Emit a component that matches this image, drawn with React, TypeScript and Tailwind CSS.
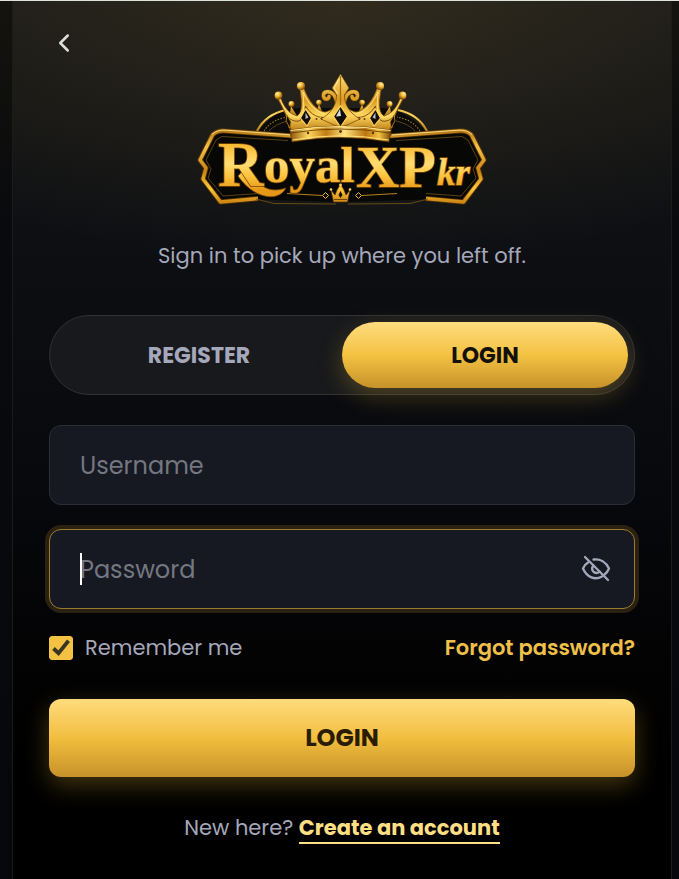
import { useState } from 'react';
import type { FormEvent } from 'react';
import { ChevronLeft, Eye } from 'lucide-react';

function CrownHalf() {
  return (
    <g>
      {/* small back spikes */}
      <path d="M288 128 L291 106 L302 124 Z" fill="url(#goldDeep)" />
      <path d="M314 119 L319 104 L326 121 Z" fill="url(#goldDeep)" />
      <circle cx="291.500" cy="104" r="3" fill="url(#ball)" />
      <circle cx="319" cy="102.500" r="2.800" fill="url(#ball)" />
      {/* outer and inner points */}
      <path
        d="M276.500 97 L280.500 97 C284 108 290 114 297 116 C303 112 302 102 299.500 87 L303.500 87 C308 100 316 111 325 112 C333 110 336 106 337 100 L340.500 100 L340.500 129 C323 128.500 307 131 291 136 C289 121 284 109 276.500 97 Z"
        fill="url(#gold)"
        stroke="#6b3f06"
        strokeWidth="0.700"
      />
      <path d="M280 99 C284 110 290 116 298 118 C305 115 304 105 303 92 C308 103 316 113 326 114" fill="none" stroke="#ffe48a" strokeWidth="0.900" />
      <path d="M284 111 C288 119 293 122 299 121 C305 118 305 111 305.500 106 C311 115 319 119 328 117" fill="none" stroke="#6d4107" strokeWidth="0.900" />
      <path d="M289 122 C290 127 291 131 292 134" fill="none" stroke="#7b4806" strokeWidth="1.600" />
      <circle cx="278.500" cy="95.500" r="3.900" fill="url(#ball)" />
      <circle cx="301" cy="86" r="4.100" fill="url(#ball)" />
      {/* scroll beside the centre spire */}
      <path
        d="M337 111 C338 103 336 98 334 95 C330 90 323 91 323.500 96 C324 100 329 100 329 96.500"
        fill="none"
        stroke="#5b3504"
        strokeWidth="4.600"
        strokeLinecap="round"
      />
      <path
        d="M337 111 C338 103 336 98 334 95 C330 90 323 91 323.500 96 C324 100 329 100 329 96.500"
        fill="none"
        stroke="url(#gold)"
        strokeWidth="3.400"
        strokeLinecap="round"
      />
      {/* side gems */}
      <path d="M305.500 109 L311.500 118 L307 126 L300.500 118 Z" fill="#120d08" stroke="#ffd45a" strokeWidth="1.100" />
      <path d="M305.500 112.500 L308.500 117.500 L305.500 119 Z" fill="#b9bcc2" />
      <path d="M287 115 L291 122 L290 128 L286 121 Z" fill="#120d08" stroke="#c98a18" strokeWidth="0.800" />
      <circle cx="322" cy="118.500" r="2" fill="#6b3c05" stroke="#ffd45a" strokeWidth="0.700" />
      <circle cx="316.500" cy="119" r="1" fill="#6b3c05" />
      <circle cx="327.500" cy="118" r="1" fill="#6b3c05" />
    </g>
  );
}

function PlateHalf() {
  return (
    <g>
      <path d="M343 138 L300 136 L224 130.500 Q219 130 215 134 L200.500 160 L204.500 169 L200.500 176 L220.500 203 L260 199.500 L343 202 Z" fill="#070706" />
      <path
        d="M294 136 L226 131 Q217 130 212.500 135 L200 160 L206 168 L203 179 L220.500 202 L258 198.500"
        fill="none"
        stroke="#593404"
        strokeWidth="5.200"
        strokeLinejoin="round"
      />
      <path
        d="M294 136 L226 131 Q217 130 212.500 135 L200 160 L206 168 L203 179 L220.500 202 L258 198.500"
        fill="none"
        stroke="url(#gold)"
        strokeWidth="3.400"
        strokeLinejoin="round"
      />
      <path d="M292 135 L226 130.200 Q217 129.500 212 134.500" fill="none" stroke="#fff0a6" strokeWidth="0.800" />
      <path d="M288 140.500 L222 136.500 L216 140 L206 160 L211 169 L208 178 L223 196 L258 193.500" fill="none" stroke="#6f5118" strokeWidth="0.800" />
      <path d="M256 199 L274 203.500 L336 204" fill="none" stroke="#6f5118" strokeWidth="0.900" />
      <path d="M287 193.500 L322 195.500" stroke="#b8811c" strokeWidth="1.100" />
      <path d="M325.500 192.500 L328.500 195.500 L325.500 198.500 L322.500 195.500 Z" fill="#0a0805" stroke="#f2b932" strokeWidth="1" />
      <path d="M257 131 Q266 114 286 110" fill="none" stroke="url(#gold)" strokeWidth="2.200" />
      <path d="M264 131 Q271 120 287 117" fill="none" stroke="#a37a24" strokeWidth="1.100" strokeDasharray="1.500 1.500" />
      <path d="M269 131 Q275 124 288 121" fill="none" stroke="#6f5118" strokeWidth="0.800" />
    </g>
  );
}

function Logo() {
  return (
    <svg viewBox="192 65 300 145" className="h-[145px] w-[300px]" role="img" aria-label="RoyalXPkr">
      <defs>
        <linearGradient id="gold" gradientUnits="userSpaceOnUse" x1="0" y1="74" x2="0" y2="204">
          <stop offset="0" stopColor="#ffe07a" />
          <stop offset="0.200" stopColor="#d99a20" />
          <stop offset="0.320" stopColor="#ffd65c" />
          <stop offset="0.440" stopColor="#b97a14" />
          <stop offset="0.560" stopColor="#f3c24a" />
          <stop offset="0.750" stopColor="#c98413" />
          <stop offset="0.880" stopColor="#ffc83c" />
          <stop offset="1" stopColor="#c67f10" />
        </linearGradient>
        <linearGradient id="goldText" gradientUnits="userSpaceOnUse" x1="0" y1="142" x2="0" y2="190">
          <stop offset="0" stopColor="#f6b52b" />
          <stop offset="0.450" stopColor="#ffdc72" />
          <stop offset="0.700" stopColor="#fdc540" />
          <stop offset="1" stopColor="#e59817" />
        </linearGradient>
        <linearGradient id="goldDeep" x1="0" y1="0" x2="0" y2="1">
          <stop offset="0" stopColor="#f0b02b" />
          <stop offset="1" stopColor="#6d4107" />
        </linearGradient>
        <linearGradient id="band" x1="0" y1="0" x2="1" y2="0">
          <stop offset="0" stopColor="#8a540a" />
          <stop offset="0.180" stopColor="#ffd75e" />
          <stop offset="0.360" stopColor="#c07c12" />
          <stop offset="0.540" stopColor="#ffe27c" />
          <stop offset="0.750" stopColor="#b9740f" />
          <stop offset="0.880" stopColor="#f7c23f" />
          <stop offset="1" stopColor="#7c4a08" />
        </linearGradient>
        <radialGradient id="ball" cx="0.350" cy="0.300" r="0.750">
          <stop offset="0" stopColor="#fff3b8" />
          <stop offset="0.450" stopColor="#f3b32d" />
          <stop offset="1" stopColor="#6b3f06" />
        </radialGradient>
      </defs>

      <path d="M257 133 Q275 108 300 108 L382 108 Q408 110 427 133 Z" fill="#0a0a08" />
      <PlateHalf />
      <g transform="matrix(-1 0 0 1 684 0)">
        <PlateHalf />
      </g>

      <CrownHalf />
      <g transform="matrix(-1 0 0 1 681 0)">
        <CrownHalf />
      </g>

      {/* centre spire and gem */}
      <path
        d="M340.500 74 L349 88 L344.500 95 C344.500 104 349 113 360 119 L340.500 128 L321 119 C332 113 336.500 104 336.500 95 L332 88 Z"
        fill="url(#gold)"
        stroke="#6b3f06"
        strokeWidth="0.700"
      />
      <path d="M340.500 76 L340.500 106" stroke="#a56a0c" strokeWidth="1.200" />
      <path d="M339 79 L334 88 L338 94" fill="none" stroke="#fff0a6" strokeWidth="0.900" />
      <path d="M340.500 106 L347.500 116.500 L340.500 127 L333.500 116.500 Z" fill="#100c08" stroke="#ffd45a" strokeWidth="1.300" />
      <path d="M340 109 L341 116 L336 116.500 Z" fill="#d5d8dc" />

      {/* base band */}
      <path d="M290 130 Q340 122 391 130 L389 142 Q340 133 292 142 Z" fill="url(#band)" stroke="#5b3504" strokeWidth="0.700" />
      <path d="M290.500 130.500 Q340 122.500 390.500 130.500" fill="none" stroke="#ffe690" strokeWidth="1" />
      <path d="M291 133 Q340 125 390 133" fill="none" stroke="#6b3f06" strokeWidth="0.900" />
      <path d="M292.500 140 Q340 131.500 388.500 140" fill="none" stroke="#ffe07a" strokeWidth="1" />
      <circle cx="308" cy="133" r="1.200" fill="#5b3504" />
      <circle cx="340.500" cy="131.500" r="1.400" fill="#5b3504" />
      <circle cx="373" cy="133" r="1.200" fill="#5b3504" />

      {/* flourish under the first letter */}
      <path d="M247 166 C255 182 266 195 286 188 C277 204 252 197 238 176 Z" fill="url(#goldText)" stroke="#7b4806" strokeWidth="0.800" />

      <g
        fill="url(#goldText)"
        stroke="#7b4806"
        strokeWidth="1.600"
        paintOrder="stroke"
        fontFamily="'Liberation Serif', serif"
        fontWeight="700"
      >
        <text x="218" y="186" fontSize="63">R</text>
        <text x="264" y="182" fontSize="51">oyal</text>
        <text x="356" y="187" fontSize="60">XP</text>
        <text x="437" y="185" fontSize="37" fontStyle="italic">kr</text>
      </g>

      {/* small crown below the wordmark */}
      <path d="M331 190 L335 195 L337 190 L340.500 184 L344 190 L346 195 L350 190 L347.500 202 L333.500 202 Z" fill="url(#gold)" stroke="#5b3504" strokeWidth="0.700" />
      <path d="M340.500 191 L342.500 195 L340.500 198 L338.500 195 Z" fill="#1a1208" />
      <path d="M334 199.500 L347 199.500" stroke="#5b3504" strokeWidth="0.800" />
      <circle cx="340.500" cy="185" r="1.400" fill="#ffd45a" />
      <circle cx="331" cy="189.500" r="1.300" fill="#ffd45a" />
      <circle cx="350" cy="189.500" r="1.300" fill="#ffd45a" />
    </svg>
  );
}

export default function App() {
  const [username, setUsername] = useState('');
  const [password, setPassword] = useState('');
  const [showPassword, setShowPassword] = useState(false);
  const [remember, setRemember] = useState(true);

  const handleSubmit = (e: FormEvent) => {
    e.preventDefault();
  };

  return (
    <div className="min-h-screen border-t border-[#dfe2da] bg-[#07080d] bg-[linear-gradient(to_bottom,#14130f,#090a0d_220px,#07080d)] pr-[7px] pl-3 font-[Poppins,Inter,sans-serif]">
      <main className="flex min-h-[calc(100vh-1px)] flex-col border-x border-[#1b1b17] bg-[radial-gradient(ellipse_85%_270px_at_50%_0,rgba(235,190,80,0.11),transparent),linear-gradient(to_bottom,#191917_0,#0d0f13_240px,#08090d_480px,#030304_650px,#000_780px)] px-9 pt-5 pb-8">
        <button type="button" aria-label="Back" className="flex h-11 w-[30px] items-center justify-center text-[#dcdcda]">
          <ChevronLeft size={32} strokeWidth={2} />
        </button>

        <div className="flex justify-center">
          <Logo />
        </div>

        <p className="mt-7 text-center text-[21px] leading-9 text-[#a5a8ba]">Sign in to pick up where you left off.</p>

        <div className="mt-[41px] flex rounded-full border border-[#303134] bg-[#18191c] p-1.5">
          <button type="button" className="h-[66px] flex-1 rounded-full text-[22px] font-bold text-[#a5a8ba]">
            REGISTER
          </button>
          <button
            type="button"
            className="h-[66px] flex-1 rounded-full bg-linear-to-b from-[#ffdc7c] via-[#f4c242] to-[#c7922a] text-[22px] font-bold text-[#14110a] shadow-[0_8px_24px_rgba(245,190,50,0.25)]"
          >
            LOGIN
          </button>
        </div>

        <form onSubmit={handleSubmit} className="mt-[30px] flex flex-col">
          <input
            type="text"
            aria-label="Username"
            placeholder="Username"
            value={username}
            onChange={(e) => setUsername(e.target.value)}
            className="h-20 w-full rounded-xl border border-[#2b2e36] bg-[#161922] px-[30px] text-2xl text-white outline-none placeholder:text-[#747780]"
          />

          <div className="relative mt-6">
            <input
              type={showPassword ? 'text' : 'password'}
              aria-label="Password"
              placeholder="Password"
              value={password}
              onChange={(e) => setPassword(e.target.value)}
              className="peer h-20 w-full rounded-xl border border-[#9a7c30] bg-[#161922] pr-16 pl-[30px] text-2xl text-white outline-none ring-4 ring-[#2a2110] placeholder:text-[#747780]"
            />
            {password === '' && <span className="absolute top-6 left-[31px] h-8 w-0.5 bg-white peer-focus:hidden" />}
            <button
              type="button"
              aria-label="Show password"
              onClick={() => setShowPassword(!showPassword)}
              className="absolute inset-y-0 right-6 text-[#a5a8ba]"
            >
              {showPassword ? (
                <Eye size={30} />
              ) : (
                <svg width="30" height="30" viewBox="0 0 30 30" fill="none" stroke="currentColor" strokeWidth="2.300" strokeLinecap="round" strokeLinejoin="round">
                  <path d="M4 3 L27 26" />
                  <path d="M12.500 5.500 C19 4.500 25 8 28 14.500 C27 17 25.500 19 23.500 20.500" />
                  <path d="M7 8.500 C4.500 10 3 12 2 14.500 C6 23.500 14 26.500 21 22.500" />
                  <path d="M12.500 11.500 C9.500 15 12 19 15.500 19 C17 19 18 18.500 18.500 17.500" />
                </svg>
              )}
            </button>
          </div>

          <div className="mt-[22px] flex items-center justify-between text-[21px] leading-[34px]">
            <label className="flex items-center gap-3 text-[#a5a8ba]">
              <span className="relative flex">
                <input
                  type="checkbox"
                  checked={remember}
                  onChange={(e) => setRemember(e.target.checked)}
                  className="peer size-6 appearance-none rounded-[3px] border border-[#747780] checked:border-[#f4c242] checked:bg-[#f4c242]"
                />
                <svg viewBox="0 0 24 24" className="pointer-events-none absolute inset-0 hidden peer-checked:block" fill="none" stroke="#3a3423" strokeWidth="3.800">
                  <path d="M4.500 12.500 L9.500 17.200 L19.500 4.800" />
                </svg>
              </span>
              Remember me
            </label>
            <a href="#forgot" className="font-semibold text-[#f0c04a]">
              Forgot password?
            </a>
          </div>

          <button
            type="submit"
            className="mt-[34px] h-[78px] rounded-xl bg-linear-to-b from-[#ffdc7c] via-[#f1be3e] to-[#c7922a] text-2xl font-bold text-[#2a1d04] shadow-[0_8px_24px_rgba(245,190,50,0.28)]"
          >
            LOGIN
          </button>
        </form>

        <p className="mt-[35px] text-center text-[21px] leading-8 text-[#a5a8ba]">
          New here?{' '}
          <a href="#register" className="border-b-2 border-[#ffdf85] font-bold text-[#ffdf85]">
            Create an account
          </a>
        </p>
      </main>
    </div>
  );
}
